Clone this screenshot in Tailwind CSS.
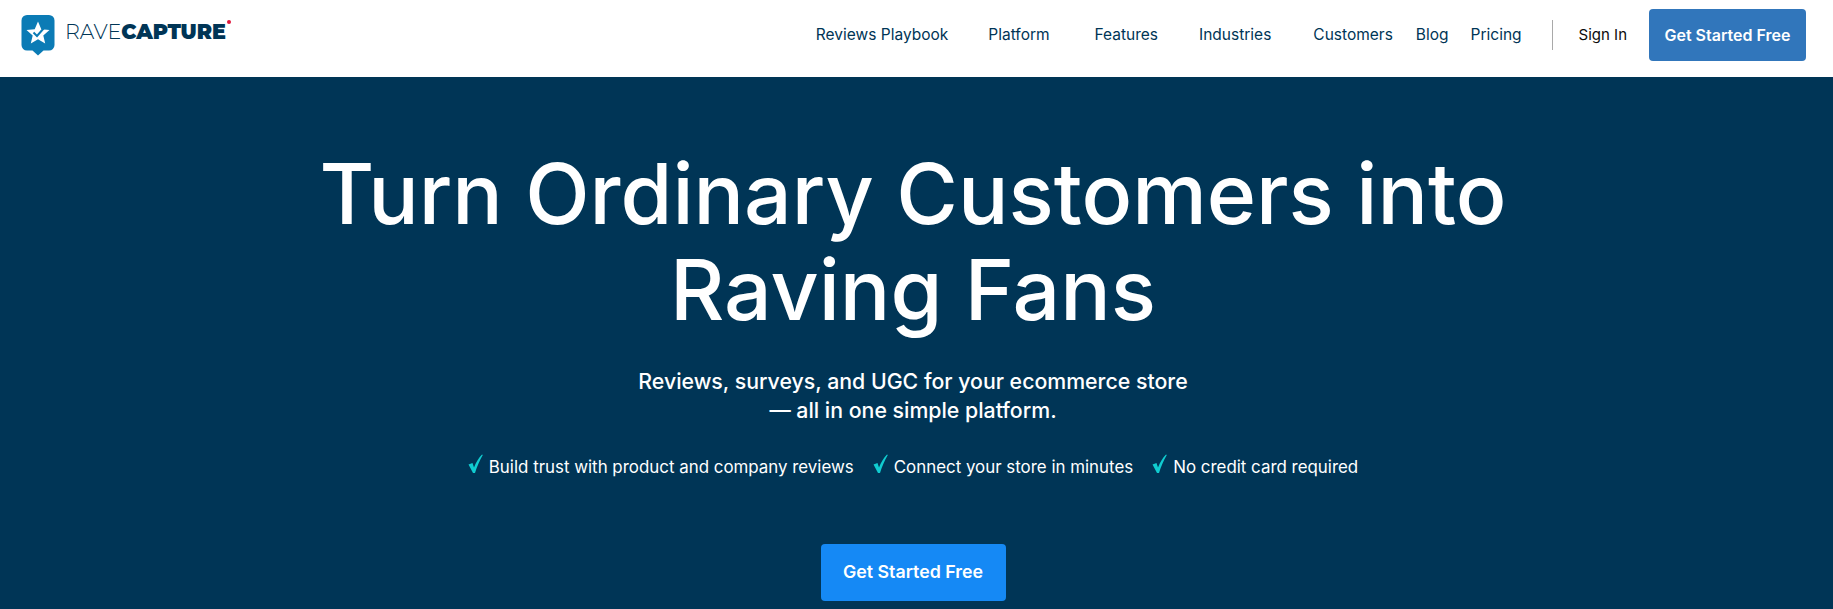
<!DOCTYPE html>
<html lang="en">
<head>
  <meta charset="UTF-8" />
  <meta name="viewport" content="width=device-width, initial-scale=1.0"/>
  <title>RaveCapture</title>
  <script src="https://cdn.jsdelivr.net/npm/@tailwindcss/browser@4"></script>
</head>
<body class="bg-[#003556] text-white font-['Inter',sans-serif] overflow-hidden">
  <header class="bg-white h-[77px] pl-[21px] pr-[27px] pb-[7px] flex items-center">
    <a href="#" class="flex items-center">
      <svg width="34" height="41" viewBox="0 0 34 41">
        <path d="M6 0H28A5.500 5.500 0 0 1 33.500 5.500V30A5.500 5.500 0 0 1 28 35.500H22.500L17 40.500L11.500 35.500H6A5.500 5.500 0 0 1 .5 30V5.500A5.500 5.500 0 0 1 6 0Z" fill="#0b7bb5"/>
        <path d="M17 6.500L20.300 14.300L28.500 15L22.300 20.400L24.200 28.500L17 24.200L9.800 28.500L11.700 20.400L5.500 15L13.700 14.300Z" fill="#fff"/>
        <path d="M12.500 17.500L16 21L23 13" fill="none" stroke="#0b7bb5" stroke-width="2"/>
      </svg>
      <span class="relative ml-[10px] mt-[-5px] text-[20.600px] leading-none text-[#003556] font-['Montserrat','Lato',sans-serif]">
        <span class="font-light">RAVE</span><span class="font-black">CAPTURE</span>
        <span class="absolute right-[-5px] top-[-2px] w-[4px] h-[4px] rounded-full bg-[#e0173d]"></span>
      </span>
    </a>
    <nav class="ml-auto flex items-center text-[15.500px] text-[#003556]">
      <a href="#" class="mr-[40px]">Reviews Playbook</a>
      <a href="#" class="mr-[45px]">Platform</a>
      <a href="#" class="mr-[41px]">Features</a>
      <a href="#" class="mr-[42px]">Industries</a>
      <a href="#" class="mr-[23px]">Customers</a>
      <a href="#" class="mr-[22px]">Blog</a>
      <a href="#">Pricing</a>
      <span class="w-px h-[30px] bg-[#a9a9a9] ml-[30px] mr-[26px]"></span>
      <a href="#" class="text-[#0b0b0b] text-[15px] mr-[22px]">Sign In</a>
      <a href="#" class="flex items-center justify-center w-[157px] h-[52px] rounded-[4px] bg-[#3176bb] text-[16px] text-white font-semibold">Get Started Free</a>
    </nav>
  </header>

  <main class="flex flex-col items-center text-center pr-[7px]">
    <h1 class="mt-[69px] text-[84px] leading-[96px] font-medium">Turn Ordinary Customers into<br>Raving Fans</h1>
    <p class="mt-[29px] text-[21.300px] leading-[29px] font-medium">Reviews, surveys, and UGC for your ecommerce store<br>— all in one simple platform.</p>
    <ul class="mt-[27px] flex items-center gap-[19px] text-[16.900px] leading-[30px]">
      <li class="flex items-center gap-[6px]">
        <svg width="15" height="20" viewBox="0 0 15 20" class="mt-[-6px]"><path d="M.5 10.500L4.500 9L6 13.500C8 8.500 10.500 4 14 .5L14.800 1C11.500 6.500 9 12.500 7 19H5Z" fill="#10ccd0"/></svg>
        Build trust with product and company reviews
      </li>
      <li class="flex items-center gap-[6px]">
        <svg width="15" height="20" viewBox="0 0 15 20" class="mt-[-6px]"><path d="M.5 10.500L4.500 9L6 13.500C8 8.500 10.500 4 14 .5L14.800 1C11.500 6.500 9 12.500 7 19H5Z" fill="#10ccd0"/></svg>
        Connect your store in minutes
      </li>
      <li class="flex items-center gap-[6px]">
        <svg width="15" height="20" viewBox="0 0 15 20" class="mt-[-6px]"><path d="M.5 10.500L4.500 9L6 13.500C8 8.500 10.500 4 14 .5L14.800 1C11.500 6.500 9 12.500 7 19H5Z" fill="#10ccd0"/></svg>
        No credit card required
      </li>
    </ul>
    <a href="#" class="mt-[62px] flex items-center justify-center w-[185px] h-[57px] rounded-[4px] bg-[#1589f5] text-[17.800px] font-semibold">Get Started Free</a>
  </main>
</body>
</html>
